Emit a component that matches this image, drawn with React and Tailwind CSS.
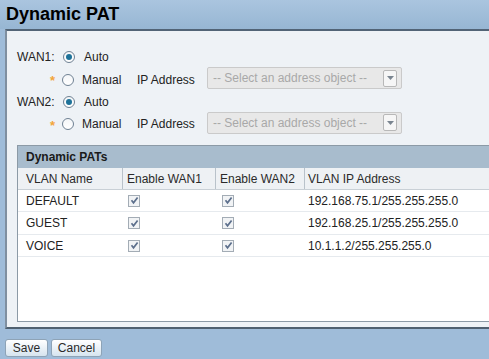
import React from "react";

function Radio({ checked }) {
  return (
    <span className="inline-flex h-[12px] w-[12px] shrink-0 items-center justify-center rounded-full border border-[#6f8193] bg-gradient-to-b from-[#f4f6f8] to-white">
      {checked && <span className="h-[6px] w-[6px] rounded-full bg-[#1e7299]" />}
    </span>
  );
}

function Check() {
  return (
    <span className="inline-flex h-[12px] w-[12px] items-center justify-center border border-[#a3acb5] bg-[#f1f3f5]">
      <svg width="9" height="9" viewBox="0 0 9 9">
        <path d="M1.5 4.3 L3.5 6.8 L7.6 1.4" fill="none" stroke="#5c6f8c" strokeWidth="1.7" />
      </svg>
    </span>
  );
}

function Select() {
  return (
    <div className="mb-[3px] flex h-[22px] w-[195px] items-center justify-between rounded-[2px] border border-[#cacaca] bg-[#e8e8e8] pl-[5px] pr-[4px]">
      <span className="text-[12px] text-[#a8a8a8]">-- Select an address object --</span>
      <span className="flex h-[17px] w-[14px] items-center justify-center rounded-[2px] border border-[#b8b8b8] bg-[#f6f6f6]">
        <svg width="7" height="4" viewBox="0 0 7 4">
          <path d="M0 0 L7 0 L3.5 4 Z" fill="#7a8590" />
        </svg>
      </span>
    </div>
  );
}

function AutoRow({ label, h }) {
  return (
    <div className={`flex items-center ${h}`}>
      <span className="w-[46px] text-[#222]">{label}</span>
      <Radio checked />
      <span className="ml-[9px]">Auto</span>
    </div>
  );
}

function ManualRow({ h }) {
  return (
    <div className={`flex items-center ${h}`}>
      <span className="w-[45px] pr-[7px] pt-[2px] text-right text-[13px] font-bold leading-none text-[#f3a53a]">*</span>
      <Radio />
      <span className="ml-[8px] w-[55px]">Manual</span>
      <span className="w-[70px]">IP Address</span>
      <Select />
    </div>
  );
}

const rows = [
  { name: "DEFAULT", ip: "192.168.75.1/255.255.255.0", h: "h-[22px]" },
  { name: "GUEST", ip: "192.168.25.1/255.255.255.0", h: "h-[23px]" },
  { name: "VOICE", ip: "10.1.1.2/255.255.255.0", h: "h-[22px]" },
];

export default function App() {
  return (
    <div className="h-[359px] w-[489px] overflow-hidden bg-[#9fbcd9] font-['Liberation_Sans',Arial,sans-serif] text-[12px] text-[#222]">
      <h1 className="h-[29px] bg-gradient-to-b from-[#aac5df] to-[#97b6d3] pl-[6px] text-[18px] font-bold leading-[28px] text-black">
        Dynamic PAT
      </h1>
      <div className="ml-[5px] h-[300px] overflow-hidden border-b-2 border-l-2 border-t-2 border-b-[#4f6070] border-l-[#7f8fa0] border-t-[#526476] bg-[#eef2f6] pl-[10px] pt-[15px]">
        <AutoRow label="WAN1:" h="h-[22px]" />
        <ManualRow h="h-[23px]" />
        <AutoRow label="WAN2:" h="h-[22px]" />
        <ManualRow h="h-[22px]" />
        <div className="mt-[10px] h-[177px] w-[520px] border border-[#8c9aa6] bg-white">
          <div className="flex h-[22px] items-center bg-[#a8bccd] pl-[8px] font-bold text-[#1a1a1a]">
            Dynamic PATs
          </div>
          <div className="flex h-[22px] items-stretch border-b border-[#c9d0d6] bg-[#eef1f4] text-[#2a2a2a]">
            <div className="flex w-[105px] items-center border-r border-[#b9c2ca] pl-[8px]">VLAN Name</div>
            <div className="flex w-[93px] items-center border-r border-[#b9c2ca] pl-[4px]">Enable WAN1</div>
            <div className="flex w-[89px] items-center border-r border-[#b9c2ca] pl-[4px]">Enable WAN2</div>
            <div className="flex flex-1 items-center pl-[3px]">VLAN IP Address</div>
          </div>
          {rows.map((r) => (
            <div key={r.name} className={`flex items-center border-b border-[#e6eaee] ${r.h}`}>
              <div className="w-[105px] pl-[8px]">{r.name}</div>
              <div className="flex w-[93px] pl-[5px]"><Check /></div>
              <div className="flex w-[89px] pl-[6px]"><Check /></div>
              <div className="flex-1 pl-[3px]">{r.ip}</div>
            </div>
          ))}
        </div>
      </div>
      <div className="ml-[5px] mt-[10px] flex gap-[3px]">
        <button className="h-[18px] w-[43px] rounded-[3px] border border-[#8ea3b6] bg-gradient-to-b from-white to-[#d6e4ef] text-[12px] leading-none text-[#2a2a2a]">
          Save
        </button>
        <button className="h-[18px] w-[51px] rounded-[3px] border border-[#8ea3b6] bg-gradient-to-b from-white to-[#d6e4ef] text-[12px] leading-none text-[#2a2a2a]">
          Cancel
        </button>
      </div>
    </div>
  );
}
